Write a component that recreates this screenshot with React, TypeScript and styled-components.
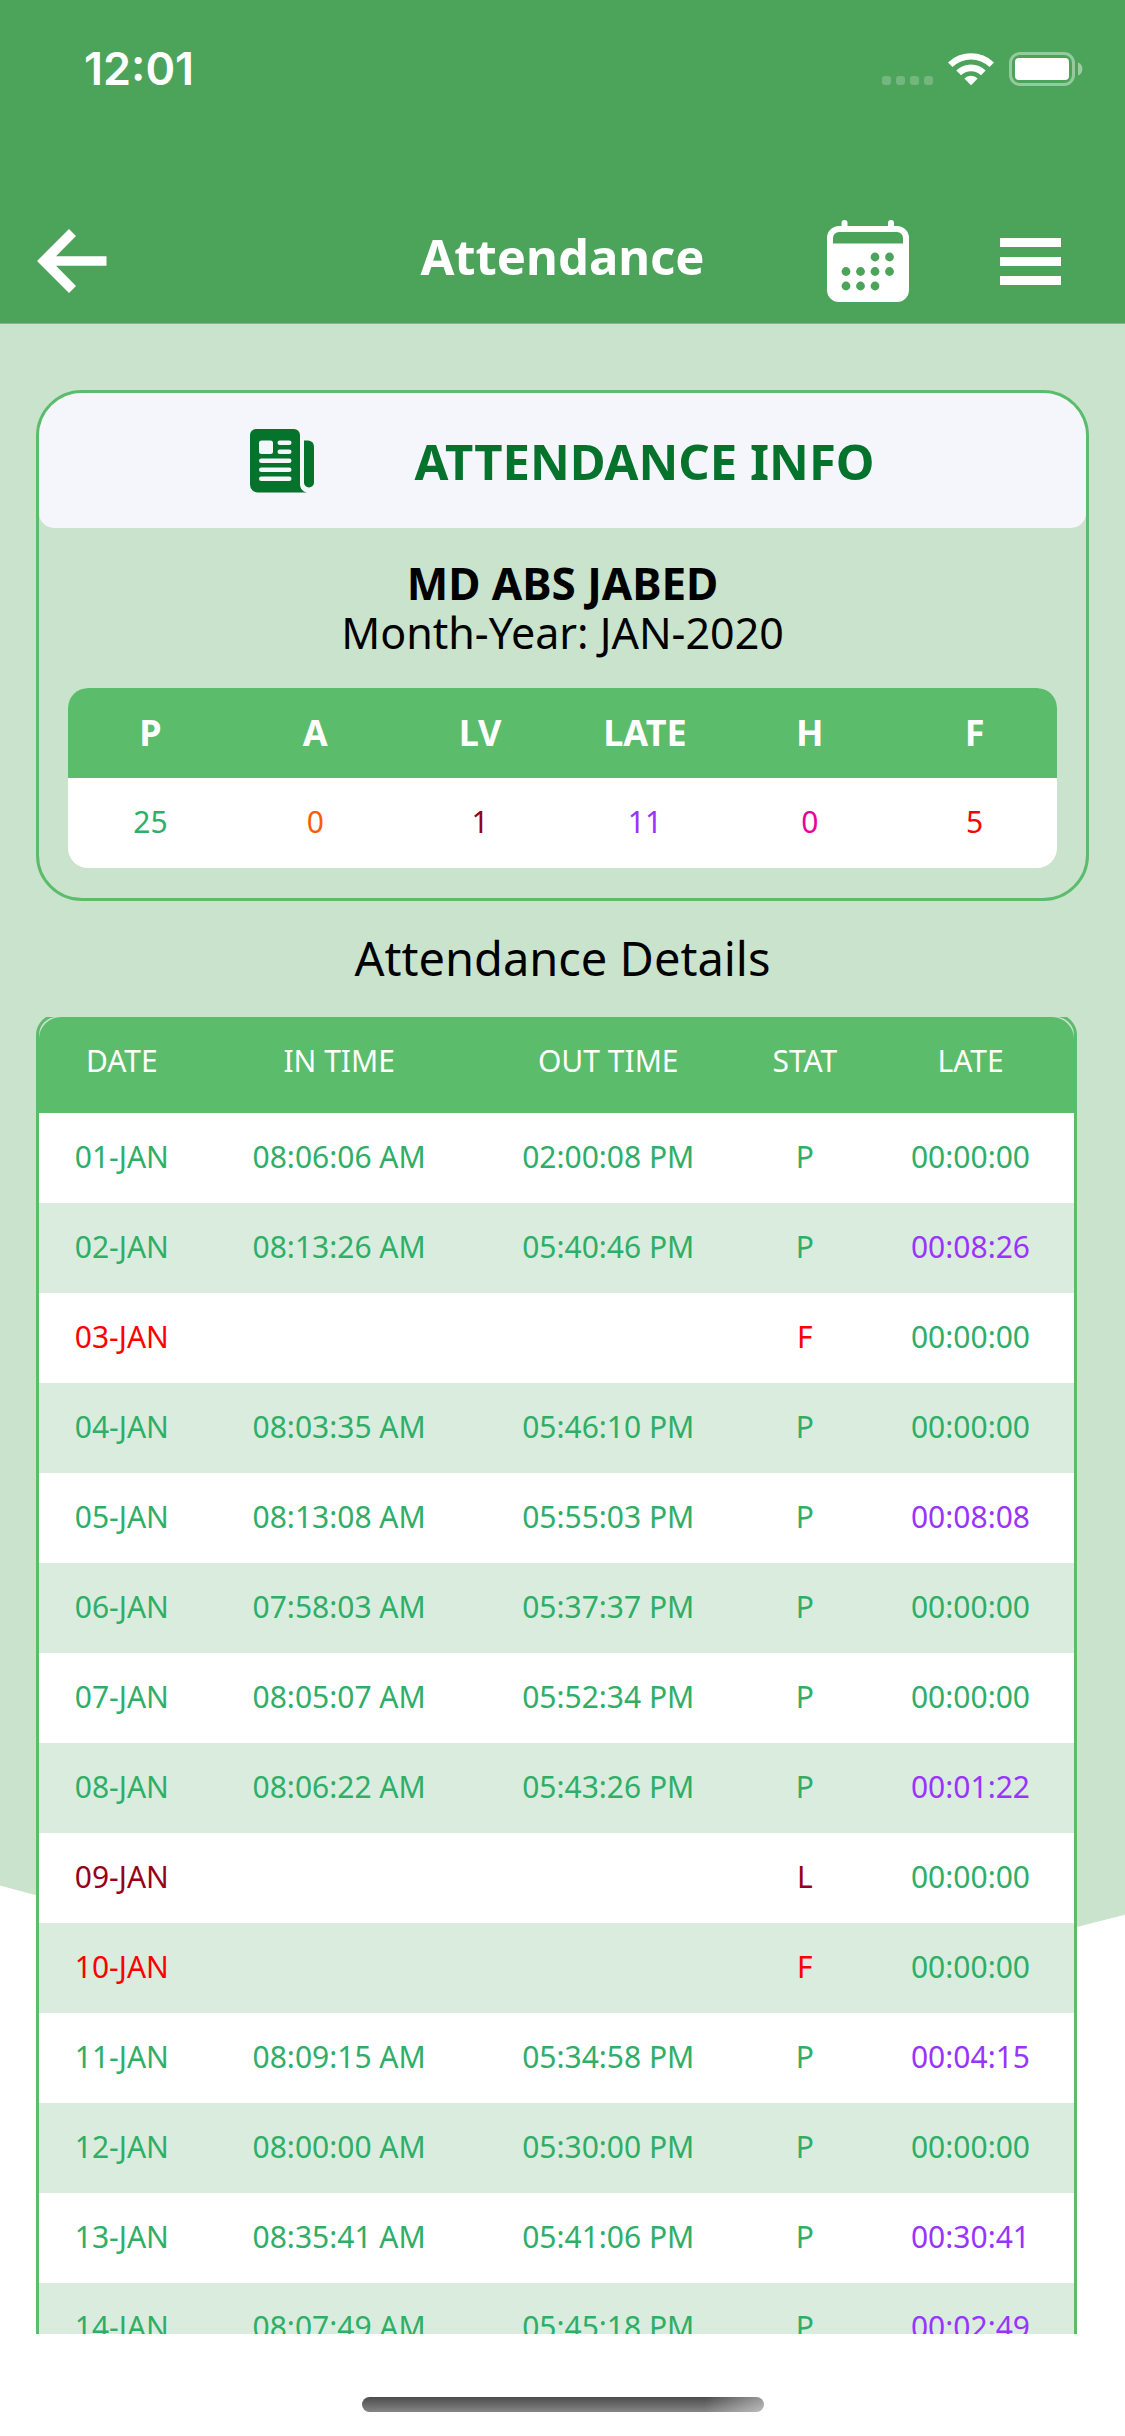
import React from 'react';
import styled, { createGlobalStyle } from 'styled-components';

const color = {
  header: '#4ca35a',
  accent: '#5bbc6b',
  tint: '#cae3cd',
  stripe: '#daecde',
  panel: '#f5f6fb',
  brand: '#05732b',
  present: '#2eae67',
  absent: '#fc5c04',
  leave: '#98001a',
  late: '#9933ff',
  holiday: '#ec009c',
  off: '#ff0000',
};

const GlobalStyle = createGlobalStyle`
  *, *::before, *::after { box-sizing: border-box; }
  body {
    margin: 0;
    background: #fff;
    color: #000;
    font-family: 'Noto Sans', 'Open Sans', sans-serif;
  }
  h1, h2, p { margin: 0; }
`;

const Screen = styled.div`
  position: relative;
  display: flex;
  flex-direction: column;
  height: 100vh;
  isolation: isolate;
`;

const Backdrop = styled.div`
  position: absolute;
  inset: 0;
  z-index: -1;
  background: ${color.tint};
  clip-path: polygon(0 0, 100% 0, 100% 78.6%, 95.7% 79.1%, 80% 81%, 50% 81%, 3.2% 77.8%, 0 77.4%);
`;

const Header = styled.header`
  background: ${color.header};
  border-bottom: 1px solid #8fae95;
  color: #fff;
`;

const StatusBar = styled.div`
  display: flex;
  align-items: center;
  justify-content: space-between;
  height: 138px;
  padding: 0 42px 0 84px;
`;

const Clock = styled.time`
  font-family: Inter, sans-serif;
  font-size: 45px;
  font-weight: 600;
  line-height: 54px;
`;

const NavBar = styled.nav`
  display: grid;
  grid-template-columns: 1fr auto 1fr;
  align-items: center;
  height: 185px;
  padding: 61px 37px 0;
`;

const NavTitle = styled.h1`
  padding-bottom: 10px;
  font-size: 49px;
  line-height: 60px;
  font-weight: 700;
`;

const NavActions = styled.div`
  display: flex;
  justify-content: flex-end;
  align-items: center;
  gap: 91px;
  padding-right: 27px;
`;

const IconButton = styled.button`
  display: flex;
  justify-self: start;
  padding: 0;
  border: 0;
  background: none;
  color: inherit;
  cursor: pointer;
`;

const InfoCard = styled.section`
  margin: 66px 36px 0;
  border: 3px solid ${color.accent};
  border-radius: 46px;
`;

const InfoHeading = styled.div`
  display: flex;
  align-items: center;
  justify-content: center;
  gap: 100px;
  height: 135px;
  border-radius: 43px 43px 15px 15px;
  background: ${color.panel};
  color: ${color.brand};
`;

const InfoTitle = styled.h2`
  font-size: 49px;
  line-height: 60px;
  font-weight: 700;
`;

const InfoBody = styled.div`
  padding: 30px 29px;
  text-align: center;
`;

const InfoLine = styled.p<{ $strong?: boolean }>`
  font-size: ${({ $strong }) => ($strong ? 44 : 43)}px;
  line-height: 50px;
  font-weight: ${({ $strong }) => ($strong ? 700 : 400)};
`;

const SummaryTable = styled.table`
  width: 100%;
  margin-top: 30px;
  border-spacing: 0;
  border-radius: 20px;
  overflow: hidden;
  table-layout: fixed;
  background: #fff;
`;

const SummaryHead = styled.th`
  height: 90px;
  padding: 0 0 2px;
  background: ${color.accent};
  color: #fff;
  font-size: 36px;
  font-weight: 700;
`;

const Cell = styled.td<{ $color?: string }>`
  height: 90px;
  padding: 0 0 3px;
  color: ${({ $color }) => $color ?? color.present};
  font-size: 30px;
  font-weight: 400;
  text-align: center;
`;

const DetailsTitle = styled.h2`
  padding: 27px 0 29px;
  font-size: 47px;
  line-height: 60px;
  font-weight: 400;
  text-align: center;
`;

const DetailsScroller = styled.div`
  flex: 1;
  min-height: 0;
  margin: 0 48px 0 36px;
  overflow-y: auto;
  scrollbar-width: none;
`;

const DetailsFrame = styled.div`
  margin-top: -3px;
  border: 3px solid ${color.accent};
  border-radius: 21px 21px 0 0;
`;

const DetailsTable = styled.table`
  width: 100%;
  border-spacing: 0;
  table-layout: fixed;
`;

const Column = styled.col<{ $share: number }>`
  width: ${({ $share }) => $share}%;
`;

const DetailsHead = styled.th`
  height: 96px;
  padding: 0 0 9px;
  background: ${color.accent};
  color: #fff;
  font-size: 30px;
  font-weight: 400;

  &:first-child { border-top-left-radius: 22px; }
  &:last-child { border-top-right-radius: 22px; }
`;

const DetailsRow = styled.tr`
  background: #fff;
  &:nth-child(even) { background: ${color.stripe}; }
`;

const SafeArea = styled.footer`
  display: flex;
  justify-content: center;
  align-items: flex-start;
  height: 102px;
  padding-top: 63px;
`;

const HomeIndicator = styled.div`
  width: 402px;
  height: 15px;
  border-radius: 8px;
  background:
    linear-gradient(100deg, transparent 85%, rgba(255, 255, 255, 0.45)),
    linear-gradient(#4c4c4c, #858585);
`;

const StatusIcons = () => (
  <svg width="201" height="36" viewBox="0 0 201 36" fill="#fff" aria-hidden="true">
    <g opacity="0.22">
      <rect x="0" y="25" width="9" height="9" rx="3" />
      <rect x="14" y="25" width="9" height="9" rx="3" />
      <rect x="28" y="25" width="9" height="9" rx="3" />
      <rect x="42" y="25" width="9" height="9" rx="3" />
    </g>
    <path d="M66 11.500a33 33 0 0 1 46 0l-4.500 4.500a26.500 26.500 0 0 0-37 0z" />
    <path d="M74.300 19.500a21 21 0 0 1 29.400 0l-4.700 4.700a14.500 14.500 0 0 0-20 0z" />
    <path d="M82.300 27.600a9.500 9.500 0 0 1 13.400 0L89 34.300z" />
    <rect x="128.500" y="2.500" width="63" height="31" rx="9.500" fill="none" stroke="#fff" strokeWidth="3" opacity="0.42" />
    <rect x="133" y="7" width="54" height="22" rx="4" />
    <path d="M196 11.500a7 7 0 0 1 0 13z" opacity="0.45" />
  </svg>
);

const BackIcon = () => (
  <svg width="70" height="64" viewBox="0 0 70 64" fill="currentColor" aria-hidden="true">
    <path d="M32 0l7 7-20 20.200h50.500v9.600H19L39 57l-7 7L0 32z" />
  </svg>
);

const CalendarIcon = () => (
  <svg width="82" height="82" viewBox="0 0 82 82" fill="currentColor" aria-hidden="true">
    <rect x="14.500" y="0" width="6" height="12" rx="3" />
    <rect x="61" y="0" width="6" height="12" rx="3" />
    <path
      fillRule="evenodd"
      d="M12 6h58a12 12 0 0 1 12 12v52a12 12 0 0 1-12 12H12A12 12 0 0 1 0 70V18A12 12 0 0 1 12 6zM12 12a6 6 0 0 0-6 6v5.500h70V18a6 6 0 0 0-6-6z"
    />
    <g fill={color.header}>
      <circle cx="48" cy="37" r="4.400" />
      <circle cx="62.500" cy="37" r="4.400" />
      <circle cx="19" cy="51.500" r="4.400" />
      <circle cx="33.500" cy="51.500" r="4.400" />
      <circle cx="48" cy="51.500" r="4.400" />
      <circle cx="62.500" cy="51.500" r="4.400" />
      <circle cx="19" cy="66" r="4.400" />
      <circle cx="33.500" cy="66" r="4.400" />
      <circle cx="48" cy="66" r="4.400" />
    </g>
  </svg>
);

const MenuIcon = () => (
  <svg width="61" height="47" viewBox="0 0 61 47" fill="currentColor" aria-hidden="true">
    <rect width="61" height="9" />
    <rect y="19" width="61" height="9" />
    <rect y="38" width="61" height="9" />
  </svg>
);

const NewspaperIcon = () => (
  <svg width="64" height="64" viewBox="0 0 64 64" fill="currentColor" aria-hidden="true">
    <path d="M6 0h38a6 6 0 0 1 6 6v49c0 4.500 2.500 7.500 7 8.500H8a8 8 0 0 1-8-8V6a6 6 0 0 1 6-6z" />
    <path d="M54 11.500h4a6 6 0 0 1 6 6v36a5 5 0 0 1-10 0z" />
    <g fill={color.panel}>
      <rect x="9" y="11.500" width="14" height="13.500" rx="2.500" />
      <rect x="27.500" y="11.500" width="14" height="4.500" rx="2.250" />
      <rect x="27.500" y="20.500" width="14" height="4.500" rx="2.250" />
      <rect x="9" y="29.500" width="32.500" height="4.500" rx="2.250" />
      <rect x="9" y="38.500" width="32.500" height="4.500" rx="2.250" />
      <rect x="9" y="47.500" width="32.500" height="4.500" rx="2.250" />
    </g>
  </svg>
);

const summary = [
  { label: 'P', value: 25, tone: color.present },
  { label: 'A', value: 0, tone: color.absent },
  { label: 'LV', value: 1, tone: color.leave },
  { label: 'LATE', value: 11, tone: color.late },
  { label: 'H', value: 0, tone: color.holiday },
  { label: 'F', value: 5, tone: color.off },
];

const columns = [
  { label: 'DATE', share: 16 },
  { label: 'IN TIME', share: 26 },
  { label: 'OUT TIME', share: 26 },
  { label: 'STAT', share: 12 },
  { label: 'LATE', share: 20 },
];

type Day = [date: string, inTime: string, outTime: string, stat: string, late: string];

const days: Day[] = [
  ['01-JAN', '08:06:06 AM', '02:00:08 PM', 'P', '00:00:00'],
  ['02-JAN', '08:13:26 AM', '05:40:46 PM', 'P', '00:08:26'],
  ['03-JAN', '', '', 'F', '00:00:00'],
  ['04-JAN', '08:03:35 AM', '05:46:10 PM', 'P', '00:00:00'],
  ['05-JAN', '08:13:08 AM', '05:55:03 PM', 'P', '00:08:08'],
  ['06-JAN', '07:58:03 AM', '05:37:37 PM', 'P', '00:00:00'],
  ['07-JAN', '08:05:07 AM', '05:52:34 PM', 'P', '00:00:00'],
  ['08-JAN', '08:06:22 AM', '05:43:26 PM', 'P', '00:01:22'],
  ['09-JAN', '', '', 'L', '00:00:00'],
  ['10-JAN', '', '', 'F', '00:00:00'],
  ['11-JAN', '08:09:15 AM', '05:34:58 PM', 'P', '00:04:15'],
  ['12-JAN', '08:00:00 AM', '05:30:00 PM', 'P', '00:00:00'],
  ['13-JAN', '08:35:41 AM', '05:41:06 PM', 'P', '00:30:41'],
  ['14-JAN', '08:07:49 AM', '05:45:18 PM', 'P', '00:02:49'],
];

const statTone: Record<string, string> = {
  P: color.present,
  F: color.off,
  L: color.leave,
};

export default function App() {
  return (
    <>
      <GlobalStyle />
      <Screen>
        <Backdrop />
        <Header>
          <StatusBar>
            <Clock>12:01</Clock>
            <StatusIcons />
          </StatusBar>
          <NavBar>
            <IconButton type="button" aria-label="Back">
              <BackIcon />
            </IconButton>
            <NavTitle>Attendance</NavTitle>
            <NavActions>
              <IconButton type="button" aria-label="Choose month">
                <CalendarIcon />
              </IconButton>
              <IconButton type="button" aria-label="Menu">
                <MenuIcon />
              </IconButton>
            </NavActions>
          </NavBar>
        </Header>

        <InfoCard>
          <InfoHeading>
            <NewspaperIcon />
            <InfoTitle>ATTENDANCE INFO</InfoTitle>
          </InfoHeading>
          <InfoBody>
            <InfoLine $strong>MD ABS JABED</InfoLine>
            <InfoLine>Month-Year: JAN-2020</InfoLine>
            <SummaryTable>
              <thead>
                <tr>
                  {summary.map(({ label }) => (
                    <SummaryHead key={label} scope="col">{label}</SummaryHead>
                  ))}
                </tr>
              </thead>
              <tbody>
                <tr>
                  {summary.map(({ label, value, tone }) => (
                    <Cell key={label} $color={tone}>{value}</Cell>
                  ))}
                </tr>
              </tbody>
            </SummaryTable>
          </InfoBody>
        </InfoCard>

        <DetailsTitle id="details-title">Attendance Details</DetailsTitle>
        <DetailsScroller>
          <DetailsFrame>
            <DetailsTable aria-labelledby="details-title">
              <colgroup>
                {columns.map(({ label, share }) => (
                  <Column key={label} $share={share} />
                ))}
              </colgroup>
              <thead>
                <tr>
                  {columns.map(({ label }) => (
                    <DetailsHead key={label} scope="col">{label}</DetailsHead>
                  ))}
                </tr>
              </thead>
              <tbody>
                {days.map(([date, inTime, outTime, stat, late]) => (
                  <DetailsRow key={date}>
                    <Cell $color={statTone[stat]}>{date}</Cell>
                    <Cell>{inTime}</Cell>
                    <Cell>{outTime}</Cell>
                    <Cell $color={statTone[stat]}>{stat}</Cell>
                    <Cell $color={late === '00:00:00' ? color.present : color.late}>{late}</Cell>
                  </DetailsRow>
                ))}
              </tbody>
            </DetailsTable>
          </DetailsFrame>
        </DetailsScroller>

        <SafeArea>
          <HomeIndicator />
        </SafeArea>
      </Screen>
    </>
  );
}
